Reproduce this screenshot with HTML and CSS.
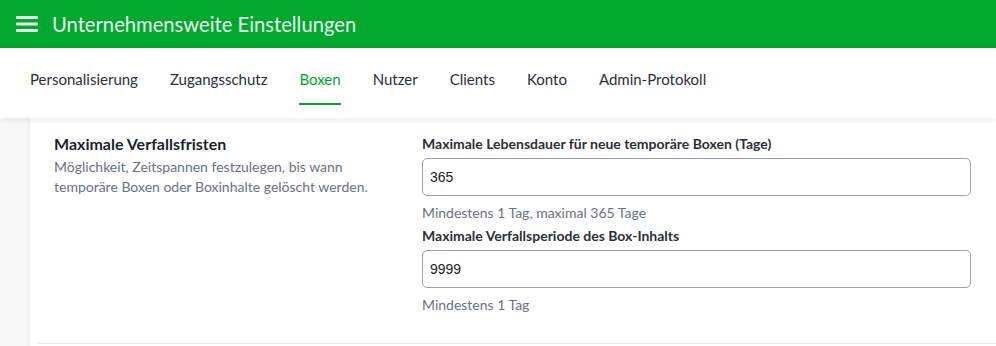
FILE: index.html
```html
<!DOCTYPE html>
<html lang="de">
<head>
    <meta charset="UTF-8">
    <meta name="viewport" content="width=device-width, initial-scale=1.0">
    <title>Unternehmensweite Einstellungen</title>
    <link rel="stylesheet" href="styles.css">
</head>
<body>
    <header class="topbar">
        <svg class="menu-icon" width="22" height="16" viewBox="0 0 22 16">
            <rect x="0" y="0" width="22" height="3" rx="1"/>
            <rect x="0" y="6.5" width="22" height="3" rx="1"/>
            <rect x="0" y="13" width="22" height="3" rx="1"/>
        </svg>
        <h1>Unternehmensweite Einstellungen</h1>
    </header>

    <nav class="tabs">
        <a href="#">Personalisierung</a>
        <a href="#">Zugangsschutz</a>
        <a href="#" class="active">Boxen</a>
        <a href="#">Nutzer</a>
        <a href="#">Clients</a>
        <a href="#">Konto</a>
        <a href="#">Admin-Protokoll</a>
    </nav>

    <main class="page">
        <div class="card">
            <section class="setting">
                <div class="setting-info">
                    <h2>Maximale Verfallsfristen</h2>
                    <p>Möglichkeit, Zeitspannen festzulegen, bis wann temporäre Boxen oder Boxinhalte gelöscht werden.</p>
                </div>
                <div class="setting-fields">
                    <label for="maxLifetime">Maximale Lebensdauer für neue temporäre Boxen (Tage)</label>
                    <input id="maxLifetime" type="text" value="365">
                    <p class="hint">Mindestens 1 Tag, maximal 365 Tage</p>

                    <label for="maxExpiry">Maximale Verfallsperiode des Box-Inhalts</label>
                    <input id="maxExpiry" type="text" value="9999">
                    <p class="hint">Mindestens 1 Tag</p>
                </div>
            </section>
        </div>
    </main>
</body>
</html>
```

FILE: styles.css
```css
html, body {
    margin: 0;
    height: 100%;
}
body {
    font-family: Lato, 'Open Sans', sans-serif;
    background-color: #f8f8f8;
    color: #1f2430;
    overflow: hidden;
}
.topbar {
    height: 48px;
    background-color: #00a82d;
    display: flex;
    align-items: center;
    padding-left: 16px;
}
.menu-icon {
    fill: #e6f7e9;
    margin-right: 14px;
}
.topbar h1 {
    margin: 0;
    font-size: 20.2px;
    font-weight: 400;
    color: #e9f8ec;
}
.tabs {
    position: relative;
    z-index: 2;
    height: 70px;
    background-color: #fff;
    display: flex;
    gap: 32px;
    padding-left: 30px;
    box-shadow: 0 2px 6px rgba(0, 0, 0, 0.08);
}
.tabs a {
    font-size: 15px;
    color: #2b2f38;
    text-decoration: none;
    padding-top: 22px;
    height: 33px;
    border-bottom: 2px solid transparent;
}
.tabs a.active {
    color: #00a82d;
    border-bottom-color: #00a82d;
}
.page {
    padding-left: 30px;
    height: 240px;
}
.card {
    background-color: #fff;
    height: 100%;
    box-shadow: -2px 0 4px rgba(0, 0, 0, 0.03);
    padding-left: 8px;
}
.setting {
    display: flex;
    padding: 16px 25px 25px 16px;
    border-bottom: 1px solid #e5e7eb;
}
.setting-info {
    width: 368px;
}
.setting-info h2 {
    margin: 0;
    font-size: 16px;
    font-weight: 700;
    color: #1a1f2e;
    line-height: 20px;
}
.setting-info p {
    margin: 3px 0 0;
    font-size: 14px;
    line-height: 20px;
    color: #6b7280;
    width: 320px;
}
.setting-fields {
    flex: 1;
    display: flex;
    flex-direction: column;
}
.setting-fields label {
    font-size: 14px;
    font-weight: 700;
    color: #2b2f38;
    line-height: 18px;
    margin-top: 1px;
}
.setting-fields input {
    margin-top: 5px;
    height: 38px;
    box-sizing: border-box;
    border: 1px solid #9ca3af;
    border-radius: 5px;
    padding: 0 7px;
    font-family: 'Liberation Sans', Arial, sans-serif;
    font-size: 14px;
    color: #222;
}
.hint {
    margin: 8px 0 4px;
    font-size: 14px;
    line-height: 18px;
    color: #6b7280;
}
```
